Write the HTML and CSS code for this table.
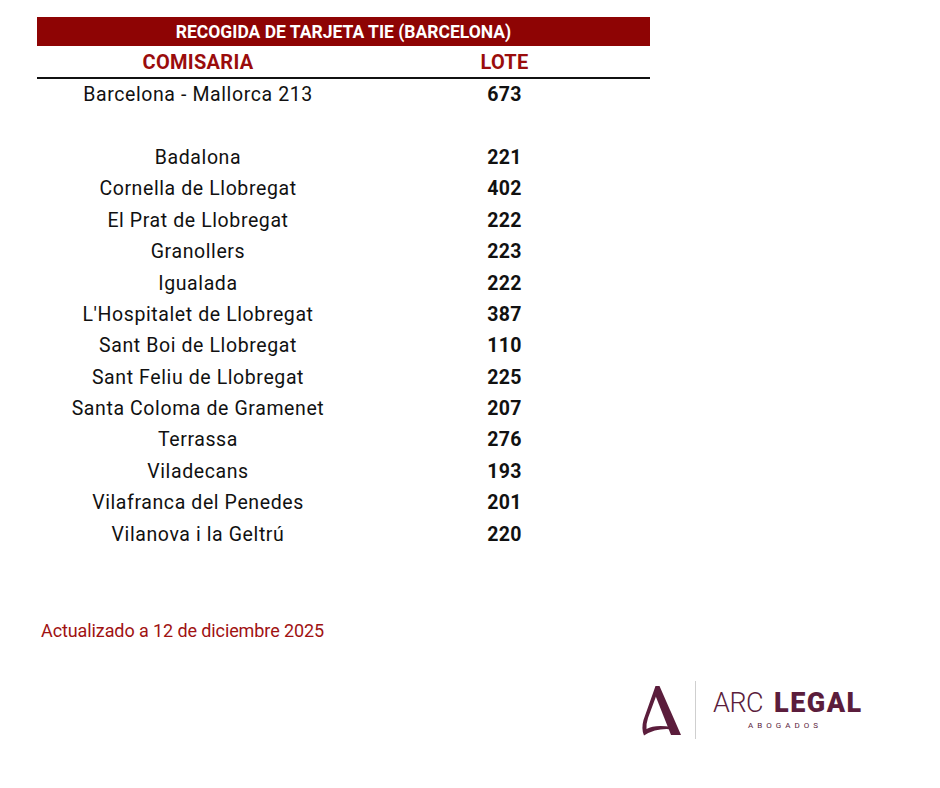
FILE: index.html
```
<!DOCTYPE html>
<html lang="es">
<head>
<meta charset="utf-8">
<title>Recogida de tarjeta TIE (Barcelona)</title>
<link rel="stylesheet" href="styles.css">
</head>
<body>
<div class="page">
  <div class="sheet">
    <div class="title">RECOGIDA DE TARJETA TIE (BARCELONA)</div>
    <div class="head">
      <div class="c1">COMISARIA</div>
      <div class="c2">LOTE</div>
    </div>
    <div class="rows">
      <div class="row"><div class="c1">Barcelona - Mallorca 213</div><div class="c2">673</div></div>
      <div class="row"><div class="c1"></div><div class="c2"></div></div>
      <div class="row"><div class="c1">Badalona</div><div class="c2">221</div></div>
      <div class="row"><div class="c1">Cornella de Llobregat</div><div class="c2">402</div></div>
      <div class="row"><div class="c1">El Prat de Llobregat</div><div class="c2">222</div></div>
      <div class="row"><div class="c1">Granollers</div><div class="c2">223</div></div>
      <div class="row"><div class="c1">Igualada</div><div class="c2">222</div></div>
      <div class="row"><div class="c1">L'Hospitalet de Llobregat</div><div class="c2">387</div></div>
      <div class="row"><div class="c1">Sant Boi de Llobregat</div><div class="c2">110</div></div>
      <div class="row"><div class="c1">Sant Feliu de Llobregat</div><div class="c2">225</div></div>
      <div class="row"><div class="c1">Santa Coloma de Gramenet</div><div class="c2">207</div></div>
      <div class="row"><div class="c1">Terrassa</div><div class="c2">276</div></div>
      <div class="row"><div class="c1">Viladecans</div><div class="c2">193</div></div>
      <div class="row"><div class="c1">Vilafranca del Penedes</div><div class="c2">201</div></div>
      <div class="row"><div class="c1">Vilanova i la Geltrú</div><div class="c2">220</div></div>
    </div>
  </div>
  <div class="updated">Actualizado a 12 de diciembre 2025</div>
  <div class="logo">
    <svg class="mark" width="46" height="56" viewBox="0 0 46 56">
      <path d="M18.5 4 L22.5 4 L44 53 L34 53 L19 15 Z" fill="#5b1d3c"/>
      <path d="M18.5 4 L21 9 L11 36 Q9 42 9.5 47 Q18 42 35 45 L35.5 47.5 Q20 45.5 7 53.5 Q4 47 6.5 38 Z" fill="#5b1d3c"/>
    </svg>
    <div class="divider"></div>
    <div class="words">
      <div class="name"><span class="arc">ARC</span><span class="legal">LEGAL</span></div>
      <div class="sub">ABOGADOS</div>
    </div>
  </div>
</div>
</body>
</html>
```
FILE: styles.css
```
html, body {
  margin: 0;
  padding: 0;
  background: #ffffff;
}
body {
  font-family: Roboto, "Open Sans", "Liberation Sans", sans-serif;
  color: #111111;
}
.page {
  width: 940px;
  height: 788px;
  padding: 17px 0 0 37px;
  box-sizing: border-box;
}
.sheet {
  width: 613px;
}
.title {
  background: #8e0404;
  color: #ffffff;
  font-weight: 700;
  font-size: 17.5px;
  letter-spacing: 0;
  height: 29px;
  line-height: 30px;
  text-align: center;
}
.head {
  display: flex;
  height: 31px;
  align-items: center;
  border-bottom: 2px solid #111111;
  color: #9a0c0c;
  font-weight: 700;
  font-size: 20px;
  letter-spacing: 0.3px;
}
.c1 {
  width: 322px;
  text-align: center;
}
.c2 {
  flex: 1;
  text-align: center;
}
.row {
  display: flex;
  height: 31.4px;
  align-items: center;
  font-size: 19.5px;
  letter-spacing: 0.6px;
}
.row .c2 {
  font-weight: 700;
  letter-spacing: 0.3px;
}
.updated {
  margin: 70px 0 0 4px;
  color: #a01212;
  font-size: 18px;
  letter-spacing: -0.1px;
}
.logo {
  display: flex;
  align-items: center;
  margin: 40px 0 0 600px;
}
.mark {
  display: block;
}
.divider {
  width: 1px;
  height: 58px;
  background: #cfcfcf;
  margin-left: 12px;
}
.words {
  margin-left: 17px;
  color: #5b1d3c;
}
.name {
  font-size: 27px;
  line-height: 28px;
  white-space: nowrap;
}
.arc {
  font-weight: 300;
  letter-spacing: -0.5px;
  margin-right: 11px;
}
.legal {
  font-weight: 900;
  letter-spacing: 1.5px;
}
.sub {
  font-size: 8px;
  letter-spacing: 4px;
  margin: 4px 0 0 35px;
}
```
